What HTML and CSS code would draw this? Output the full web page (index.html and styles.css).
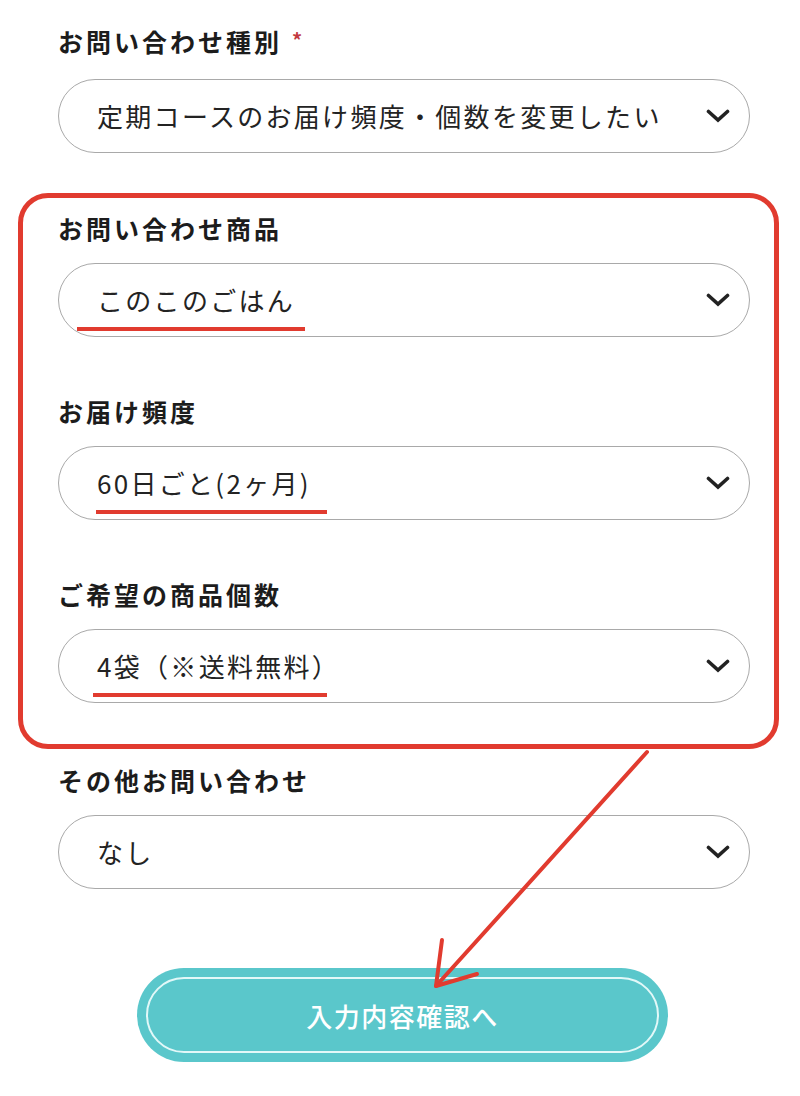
FILE: index.html
```html
<!DOCTYPE html>
<html lang="ja">
<head>
<meta charset="utf-8">
<title>お問い合わせ</title>
<link rel="stylesheet" href="styles.css">
</head>
<body>
<div class="page">
  <div class="field">
    <div class="label">お問い合わせ種別<span class="req">*</span></div>
    <div class="select">
      <span class="value">定期コースのお届け頻度・個数を変更したい</span>
      <svg class="chev" viewBox="0 0 24 14" width="24" height="14"><polyline points="2.5,2.5 12,11 21.5,2.5" /></svg>
    </div>
  </div>

  <div class="highlight">
    <div class="field">
      <div class="label">お問い合わせ商品</div>
      <div class="select">
        <span class="value">このこのごはん</span>
        <svg class="chev" viewBox="0 0 24 14" width="24" height="14"><polyline points="2.5,2.5 12,11 21.5,2.5" /></svg>
        <span class="mark mark-1"></span>
      </div>
    </div>
    <div class="field">
      <div class="label">お届け頻度</div>
      <div class="select">
        <span class="value">60日ごと(2ヶ月)</span>
        <svg class="chev" viewBox="0 0 24 14" width="24" height="14"><polyline points="2.5,2.5 12,11 21.5,2.5" /></svg>
        <span class="mark mark-2"></span>
      </div>
    </div>
    <div class="field">
      <div class="label">ご希望の商品個数</div>
      <div class="select">
        <span class="value">4袋（※送料無料）</span>
        <svg class="chev" viewBox="0 0 24 14" width="24" height="14"><polyline points="2.5,2.5 12,11 21.5,2.5" /></svg>
        <span class="mark mark-3"></span>
      </div>
    </div>
  </div>

  <div class="field field-after">
    <div class="label">その他お問い合わせ</div>
    <div class="select">
      <span class="value">なし</span>
      <svg class="chev" viewBox="0 0 24 14" width="24" height="14"><polyline points="2.5,2.5 12,11 21.5,2.5" /></svg>
    </div>
  </div>

  <div class="actions">
    <button class="submit" type="button">入力内容確認へ</button>
  </div>

  <svg class="arrow" viewBox="0 0 800 1096" width="800" height="1096">
    <line x1="647" y1="752" x2="436" y2="986" />
    <polyline points="442,940 436,986 477,974" />
  </svg>
</div>
</body>
</html>
```

FILE: styles.css
```css
html, body {
  margin: 0;
  padding: 0;
  background: #ffffff;
}

body {
  font-family: "Noto Sans CJK JP", "Noto Sans", sans-serif;
  color: #222222;
}

.page {
  position: relative;
  width: 800px;
  height: 1096px;
  box-sizing: border-box;
  padding: 24px 50px 0 58px;
  overflow: hidden;
}

.label {
  font-size: 25px;
  font-weight: 700;
  line-height: 34px;
  letter-spacing: 3px;
  color: #1c1c1c;
  margin-bottom: 18px;
}

.req {
  color: #c23a3f;
  font-size: 20px;
  font-weight: 700;
  margin-left: 10px;
  position: relative;
  top: -4px;
}

.select {
  position: relative;
  height: 74px;
  box-sizing: border-box;
  border: 1.5px solid #a9a9a9;
  border-radius: 37px;
  background: #ffffff;
  display: flex;
  align-items: center;
  justify-content: space-between;
  padding: 0 19px 0 38px;
}

.value {
  font-size: 26px;
  line-height: 1;
  letter-spacing: 2.3px;
  color: #232323;
  white-space: nowrap;
}

.chev {
  flex: none;
}

.chev polyline {
  fill: none;
  stroke: #222222;
  stroke-width: 3.6;
  stroke-linecap: round;
  stroke-linejoin: miter;
}

.highlight {
  margin: 40px -29px 0 -40px;
  border: 5px solid #e13b2f;
  border-radius: 30px;
  padding: 13px 24px 41px 35px;
}

.highlight .field + .field {
  margin-top: 57px;
}

.mark {
  position: absolute;
  height: 4px;
  background: #e13b2f;
  top: 63px;
}

.mark-1 {
  left: 18px;
  width: 228px;
}

.mark-2 {
  left: 37px;
  width: 231px;
}

.mark-3 {
  left: 34px;
  width: 234px;
}

.field-after {
  margin-top: 14px;
}

.actions {
  margin-top: 79px;
  padding-left: 79px;
}

.submit {
  position: relative;
  width: 531px;
  height: 94px;
  border: none;
  border-radius: 47px;
  background: #5ac7cb;
  color: #ffffff;
  font-family: "Noto Sans CJK JP", "Noto Sans", sans-serif;
  font-size: 26px;
  font-weight: 500;
  letter-spacing: 1.5px;
  padding: 0;
  display: block;
}

.submit::before {
  content: "";
  position: absolute;
  top: 9px;
  left: 9px;
  right: 9px;
  bottom: 9px;
  border: 2px solid #e2f8f8;
  border-radius: 38px;
}

.arrow {
  position: absolute;
  top: 0;
  left: 0;
  pointer-events: none;
}

.arrow line,
.arrow polyline {
  fill: none;
  stroke: #e13b2f;
  stroke-width: 4;
  stroke-linecap: round;
  stroke-linejoin: round;
}
```
